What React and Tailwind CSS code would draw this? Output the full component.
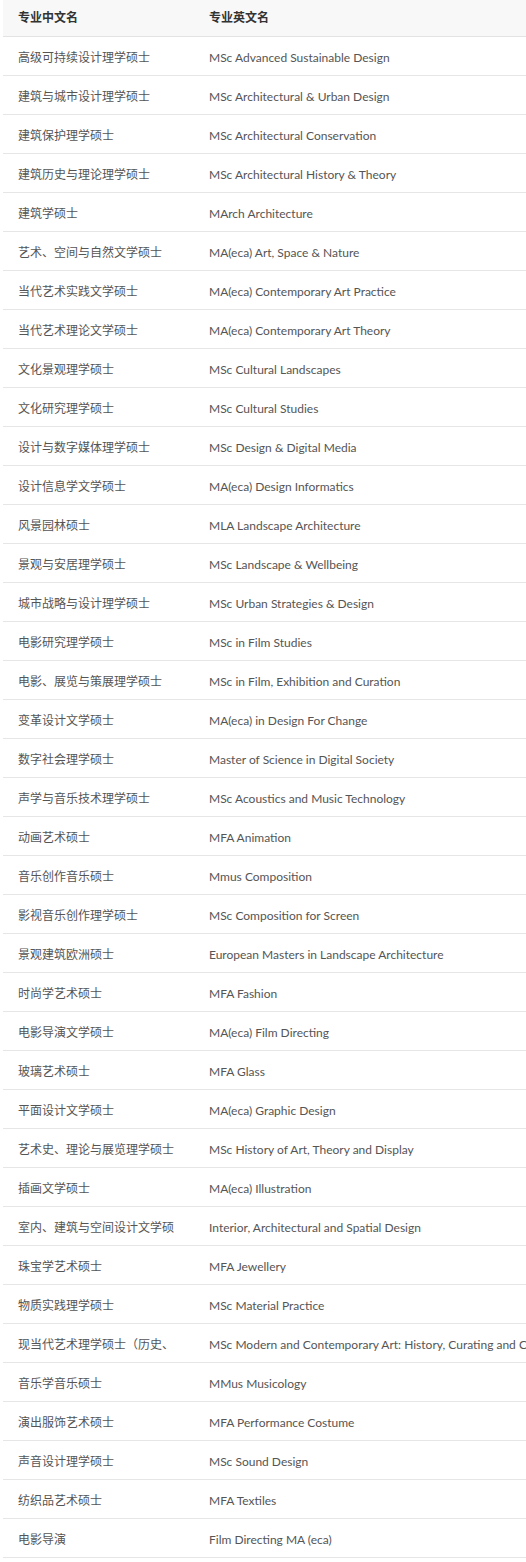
import React from 'react';

const rows = [
  ['高级可持续设计理学硕士', 'MSc Advanced Sustainable Design'],
  ['建筑与城市设计理学硕士', 'MSc Architectural & Urban Design'],
  ['建筑保护理学硕士', 'MSc Architectural Conservation'],
  ['建筑历史与理论理学硕士', 'MSc Architectural History & Theory'],
  ['建筑学硕士', 'MArch Architecture'],
  ['艺术、空间与自然文学硕士', 'MA(eca) Art, Space & Nature'],
  ['当代艺术实践文学硕士', 'MA(eca) Contemporary Art Practice'],
  ['当代艺术理论文学硕士', 'MA(eca) Contemporary Art Theory'],
  ['文化景观理学硕士', 'MSc Cultural Landscapes'],
  ['文化研究理学硕士', 'MSc Cultural Studies'],
  ['设计与数字媒体理学硕士', 'MSc Design & Digital Media'],
  ['设计信息学文学硕士', 'MA(eca) Design Informatics'],
  ['风景园林硕士', 'MLA Landscape Architecture'],
  ['景观与安居理学硕士', 'MSc Landscape & Wellbeing'],
  ['城市战略与设计理学硕士', 'MSc Urban Strategies & Design'],
  ['电影研究理学硕士', 'MSc in Film Studies'],
  ['电影、展览与策展理学硕士', 'MSc in Film, Exhibition and Curation'],
  ['变革设计文学硕士', 'MA(eca) in Design For Change'],
  ['数字社会理学硕士', 'Master of Science in Digital Society'],
  ['声学与音乐技术理学硕士', 'MSc Acoustics and Music Technology'],
  ['动画艺术硕士', 'MFA Animation'],
  ['音乐创作音乐硕士', 'Mmus Composition'],
  ['影视音乐创作理学硕士', 'MSc Composition for Screen'],
  ['景观建筑欧洲硕士', 'European Masters in Landscape Architecture'],
  ['时尚学艺术硕士', 'MFA Fashion'],
  ['电影导演文学硕士', 'MA(eca) Film Directing'],
  ['玻璃艺术硕士', 'MFA Glass'],
  ['平面设计文学硕士', 'MA(eca) Graphic Design'],
  ['艺术史、理论与展览理学硕士', 'MSc History of Art, Theory and Display'],
  ['插画文学硕士', 'MA(eca) Illustration'],
  ['室内、建筑与空间设计文学硕', 'Interior, Architectural and Spatial Design'],
  ['珠宝学艺术硕士', 'MFA Jewellery'],
  ['物质实践理学硕士', 'MSc Material Practice'],
  ['现当代艺术理学硕士（历史、', 'MSc Modern and Contemporary Art: History, Curating and C'],
  ['音乐学音乐硕士', 'MMus Musicology'],
  ['演出服饰艺术硕士', 'MFA Performance Costume'],
  ['声音设计理学硕士', 'MSc Sound Design'],
  ['纺织品艺术硕士', 'MFA Textiles'],
  ['电影导演', 'Film Directing MA (eca)'],
];

const font = { fontFamily: 'Lato, "Noto Sans CJK SC", sans-serif' };

export default function App() {
  return (
    <div className="w-[526px] h-[1562px] overflow-hidden bg-white" style={font}>
      <div className="ml-[3px] w-[523px] text-[12px]">
        <div className="flex h-[37px] items-center border-b border-[#e3e3e3] bg-[#f8f8f8] font-bold text-[#333]">
          <div className="w-[191px] shrink-0 pl-[15px]">专业中文名</div>
          <div className="flex-1 pl-[15px]">专业英文名</div>
        </div>
        {rows.map(([cn, en]) => (
          <div key={cn} className="flex h-[39px] items-center border-b border-[#e6e6e6] pt-[3px] text-[#555]">
            <div className="w-[191px] shrink-0 whitespace-nowrap pl-[15px]">{cn}</div>
            <div className="min-w-0 flex-1 whitespace-nowrap pl-[15px]">{en}</div>
          </div>
        ))}
      </div>
    </div>
  );
}
